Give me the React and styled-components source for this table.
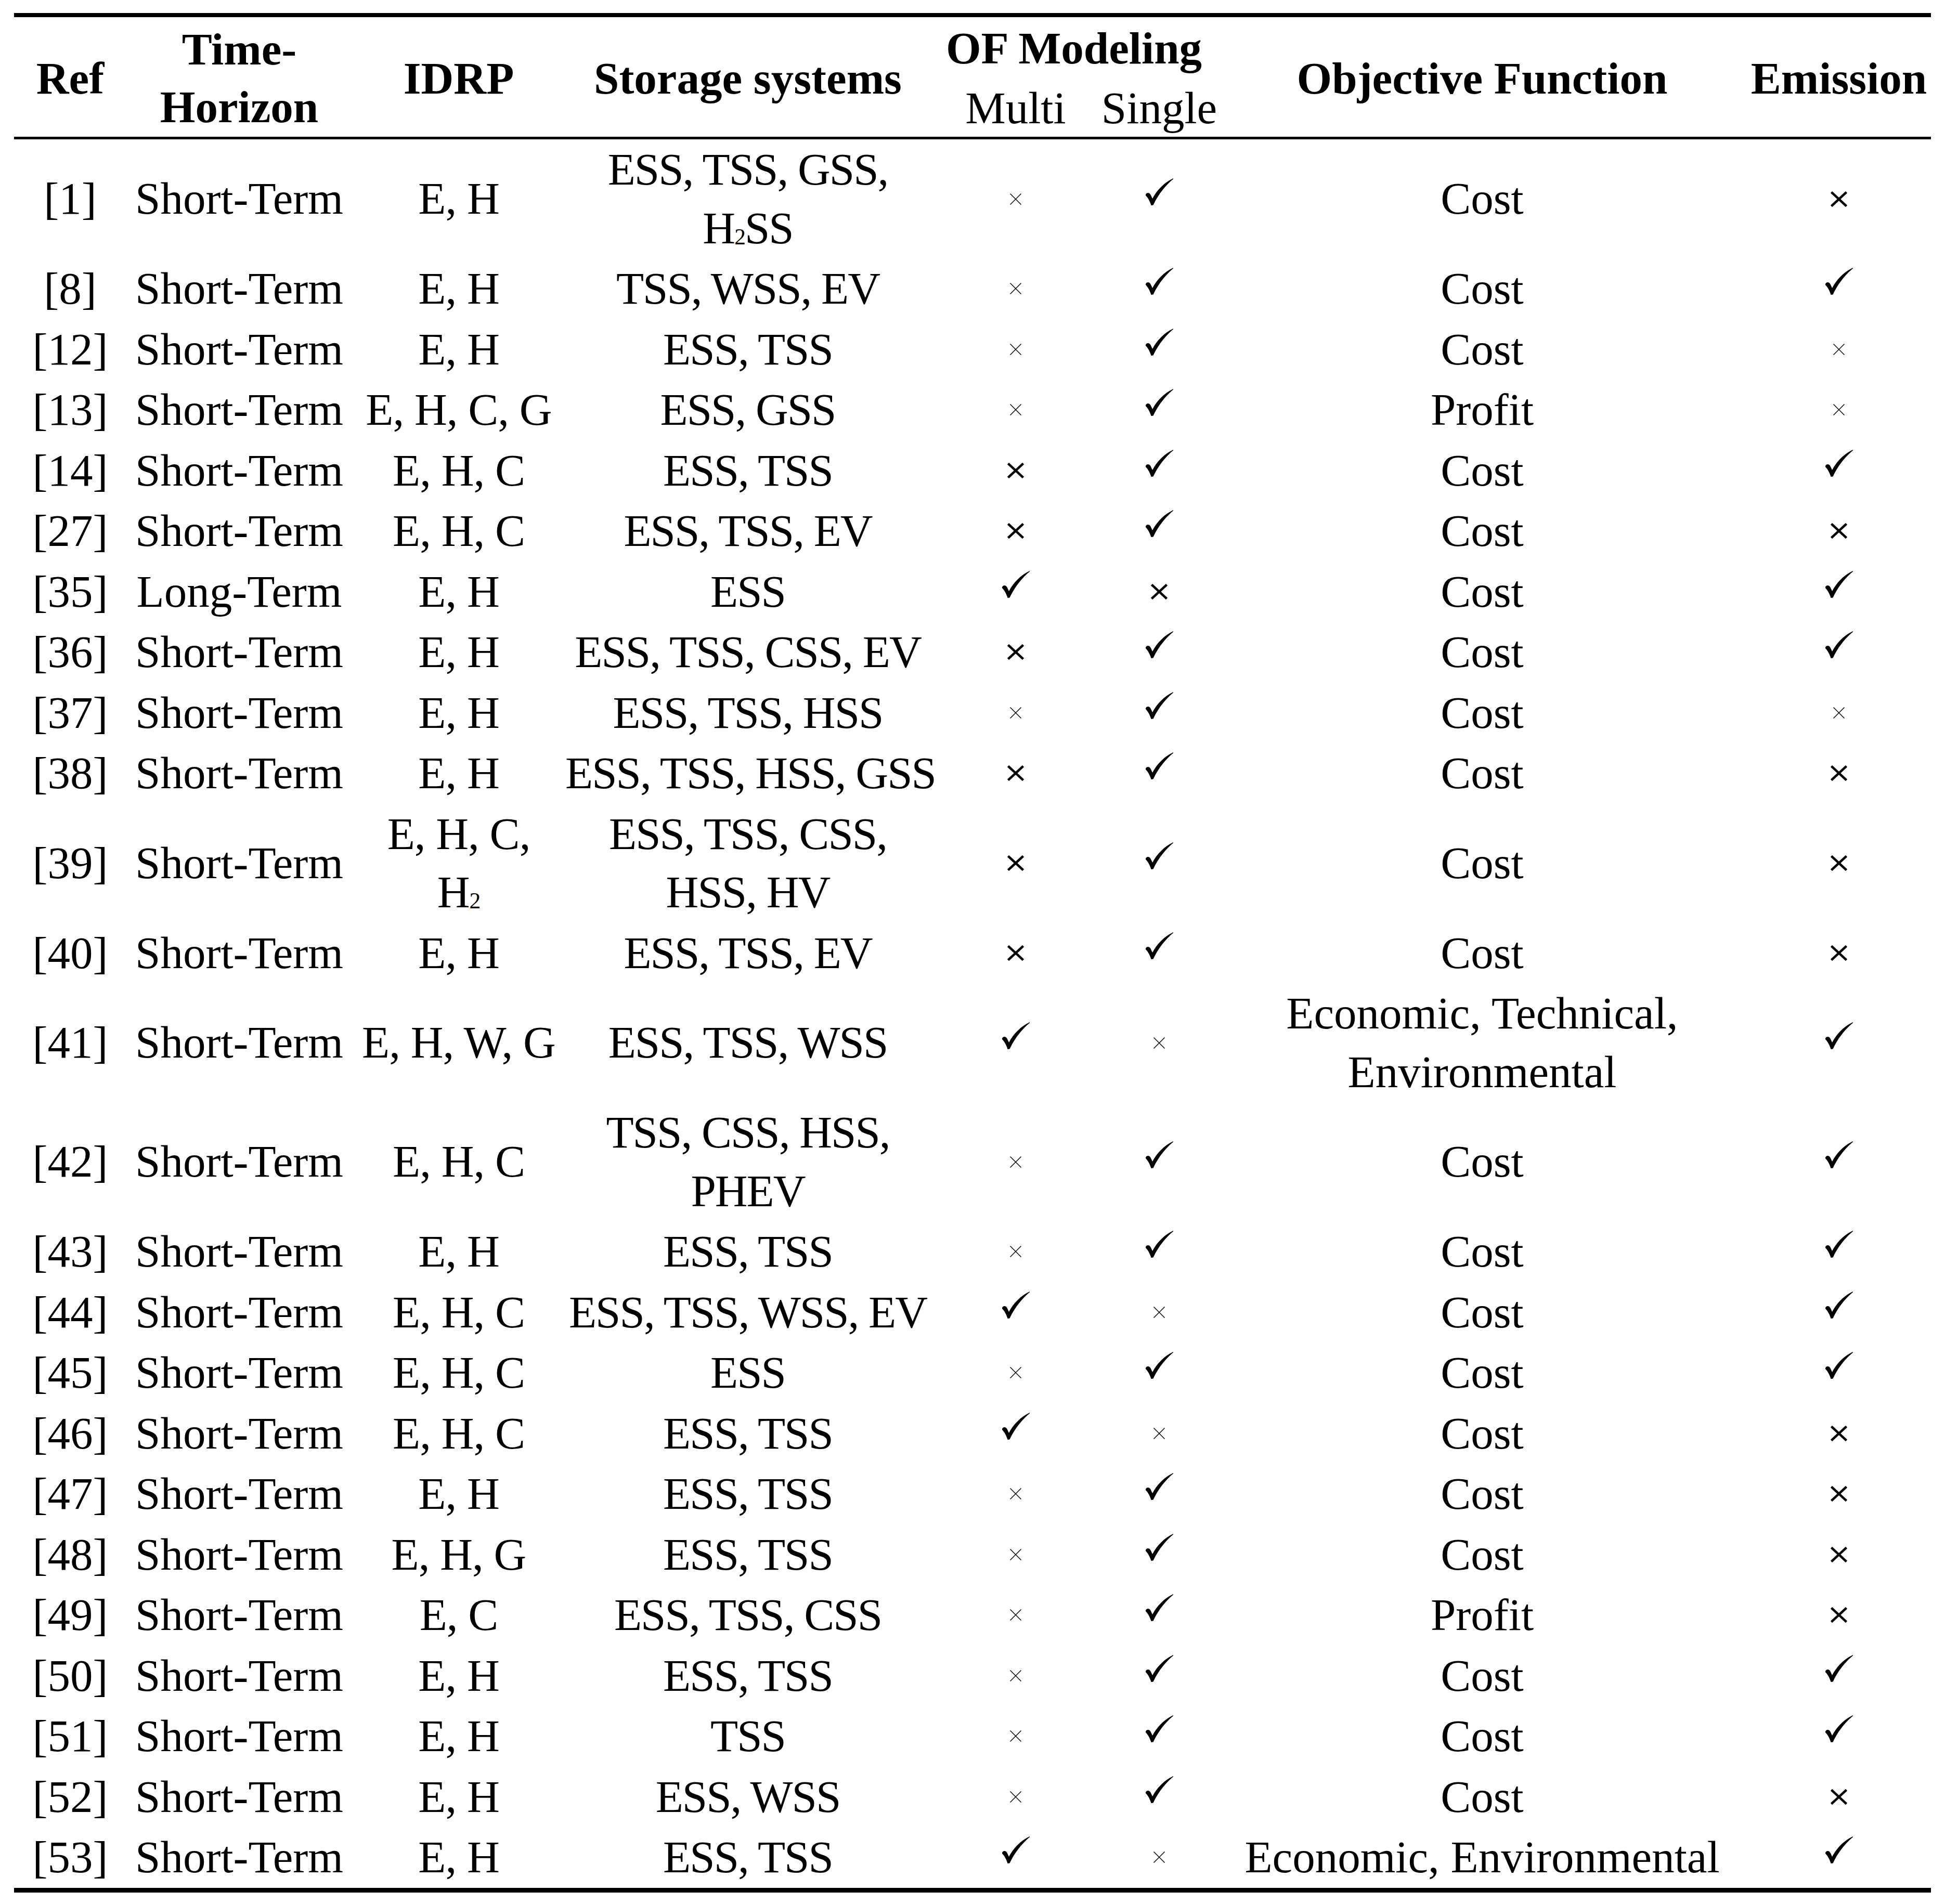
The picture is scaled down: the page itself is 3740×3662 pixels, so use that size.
import React from "react";
import styled, { createGlobalStyle } from "styled-components";

const GlobalStyle = createGlobalStyle`
  html, body {
    margin: 0;
    padding: 0;
    background: #ffffff;
  }
`;

const Page = styled.div`
  padding: 25px 0 0 27px;
  width: 3713px;
  height: 3662px;
  box-sizing: border-box;
  background: #ffffff;
`;

const Table = styled.table`
  width: 3686px;
  table-layout: fixed;
  border-collapse: collapse;
  font-family: "Liberation Serif", "Times New Roman", serif;
  font-size: 87px;
  color: #000000;
`;

const HeadCell = styled.th`
  padding: 4px 0 0;
  line-height: 111px;
  font-weight: ${(p) => (p.$light ? 400 : 700)};
  text-align: center;
  vertical-align: middle;
  white-space: nowrap;
  border-top: ${(p) => (p.$top ? "8px solid #000" : "none")};
  border-bottom: ${(p) => (p.$bottom ? "5px solid #000" : "none")};
`;

const Row = styled.tr`
  & > td {
    border-bottom: ${(p) => (p.$last ? "9px solid #000" : "none")};
  }
`;

const Cell = styled.td`
  padding: 2px 0 2px;
  line-height: 112.5px;
  text-align: center;
  vertical-align: middle;
  white-space: nowrap;
  letter-spacing: ${(p) => p.$tight || "normal"};
`;

const Sub = styled.sub`
  font-size: 50%;
  line-height: 0;
  vertical-align: -0.05em;
`;

const MarkBox = styled.svg`
  display: block;
  margin: 0 auto;
  transform: translateY(${(p) => p.$shift || 0}px);
`;

const Mark = ({ kind }) => {
  if (kind === "v") {
    return (
      <MarkBox width="53" height="52" viewBox="0 0 53 52" $shift={-14}>
        <path
          d="M0 31 C2 27 7 27 9.5 31.5 L13 39 C22 22 36 8 53 0 L53 1.2 C40 12 25 29 14.5 51.5 L10.5 52 C8.5 45 4.5 37 0 33 Z"
          fill="#000"
        />
      </MarkBox>
    );
  }
  if (kind === "X") {
    return (
      <MarkBox width="32" height="30" viewBox="0 0 32 30">
        <g stroke="#000" strokeWidth="4.6" strokeLinecap="butt">
          <line x1="1.5" y1="1.5" x2="30.5" y2="28.5" />
          <line x1="30.5" y1="1.5" x2="1.5" y2="28.5" />
        </g>
      </MarkBox>
    );
  }
  return (
    <MarkBox width="22" height="22" viewBox="0 0 22 22">
      <g stroke="#000" strokeWidth="1.4">
        <line x1="0.5" y1="0.5" x2="21.5" y2="21.5" />
        <line x1="21.5" y1="0.5" x2="0.5" y2="21.5" />
      </g>
    </MarkBox>
  );
};

const rows = [
  ["[1]", "Short-Term", "E, H", <>ESS, TSS, GSS,<br />H<Sub>2</Sub>SS</>, "x", "v", "Cost", "X"],
  ["[8]", "Short-Term", "E, H", "TSS, WSS, EV", "x", "v", "Cost", "v"],
  ["[12]", "Short-Term", "E, H", "ESS, TSS", "x", "v", "Cost", "x"],
  ["[13]", "Short-Term", "E, H, C, G", "ESS, GSS", "x", "v", "Profit", "x"],
  ["[14]", "Short-Term", "E, H, C", "ESS, TSS", "X", "v", "Cost", "v"],
  ["[27]", "Short-Term", "E, H, C", "ESS, TSS, EV", "X", "v", "Cost", "X"],
  ["[35]", "Long-Term", "E, H", "ESS", "v", "X", "Cost", "v"],
  ["[36]", "Short-Term", "E, H", "ESS, TSS, CSS, EV", "X", "v", "Cost", "v"],
  ["[37]", "Short-Term", "E, H", "ESS, TSS, HSS", "x", "v", "Cost", "x"],
  ["[38]", "Short-Term", "E, H", "ESS, TSS, HSS, GSS", "X", "v", "Cost", "X"],
  ["[39]", "Short-Term", <>E, H, C,<br />H<Sub>2</Sub></>, <>ESS, TSS, CSS,<br />HSS, HV</>, "X", "v", "Cost", "X"],
  ["[40]", "Short-Term", "E, H", "ESS, TSS, EV", "X", "v", "Cost", "X"],
  ["[41]", "Short-Term", "E, H, W, G", "ESS, TSS, WSS", "v", "x", <>Economic, Technical,<br />Environmental</>, "v"],
  ["[42]", "Short-Term", "E, H, C", <>TSS, CSS, HSS,<br />PHEV</>, "x", "v", "Cost", "v"],
  ["[43]", "Short-Term", "E, H", "ESS, TSS", "x", "v", "Cost", "v"],
  ["[44]", "Short-Term", "E, H, C", "ESS, TSS, WSS, EV", "v", "x", "Cost", "v"],
  ["[45]", "Short-Term", "E, H, C", "ESS", "x", "v", "Cost", "v"],
  ["[46]", "Short-Term", "E, H, C", "ESS, TSS", "v", "x", "Cost", "X"],
  ["[47]", "Short-Term", "E, H", "ESS, TSS", "x", "v", "Cost", "X"],
  ["[48]", "Short-Term", "E, H, G", "ESS, TSS", "x", "v", "Cost", "X"],
  ["[49]", "Short-Term", "E, C", "ESS, TSS, CSS", "x", "v", "Profit", "X"],
  ["[50]", "Short-Term", "E, H", "ESS, TSS", "x", "v", "Cost", "v"],
  ["[51]", "Short-Term", "E, H", "TSS", "x", "v", "Cost", "v"],
  ["[52]", "Short-Term", "E, H", "ESS, WSS", "x", "v", "Cost", "X"],
  ["[53]", "Short-Term", "E, H", "ESS, TSS", "v", "x", "Economic, Environmental", "v"],
];

const widths = [216, 434, 410, 702, 328, 224, 1018, 354];

export default function App() {
  return (
    <Page>
      <GlobalStyle />
      <Table>
        <colgroup>
          {widths.map((w, i) => (
            <col key={i} style={{ width: w }} />
          ))}
        </colgroup>
        <thead>
          <tr>
            <HeadCell rowSpan={2} $top $bottom>Ref</HeadCell>
            <HeadCell rowSpan={2} $top $bottom>Time-<br />Horizon</HeadCell>
            <HeadCell rowSpan={2} $top $bottom>IDRP</HeadCell>
            <HeadCell rowSpan={2} $top $bottom>Storage systems</HeadCell>
            <HeadCell colSpan={2} $top>OF Modeling</HeadCell>
            <HeadCell rowSpan={2} $top $bottom>Objective Function</HeadCell>
            <HeadCell rowSpan={2} $top $bottom>Emission</HeadCell>
          </tr>
          <tr>
            <HeadCell $light $bottom>Multi</HeadCell>
            <HeadCell $light $bottom>Single</HeadCell>
          </tr>
        </thead>
        <tbody>
          {rows.map((r, i) => (
            <Row key={r[0]} $last={i === rows.length - 1}>
              <Cell>{r[0]}</Cell>
              <Cell>{r[1]}</Cell>
              <Cell $tight="-1px">{r[2]}</Cell>
              <Cell $tight="-2px">{r[3]}</Cell>
              <Cell><Mark kind={r[4]} /></Cell>
              <Cell><Mark kind={r[5]} /></Cell>
              <Cell>{r[6]}</Cell>
              <Cell><Mark kind={r[7]} /></Cell>
            </Row>
          ))}
        </tbody>
      </Table>
    </Page>
  );
}
